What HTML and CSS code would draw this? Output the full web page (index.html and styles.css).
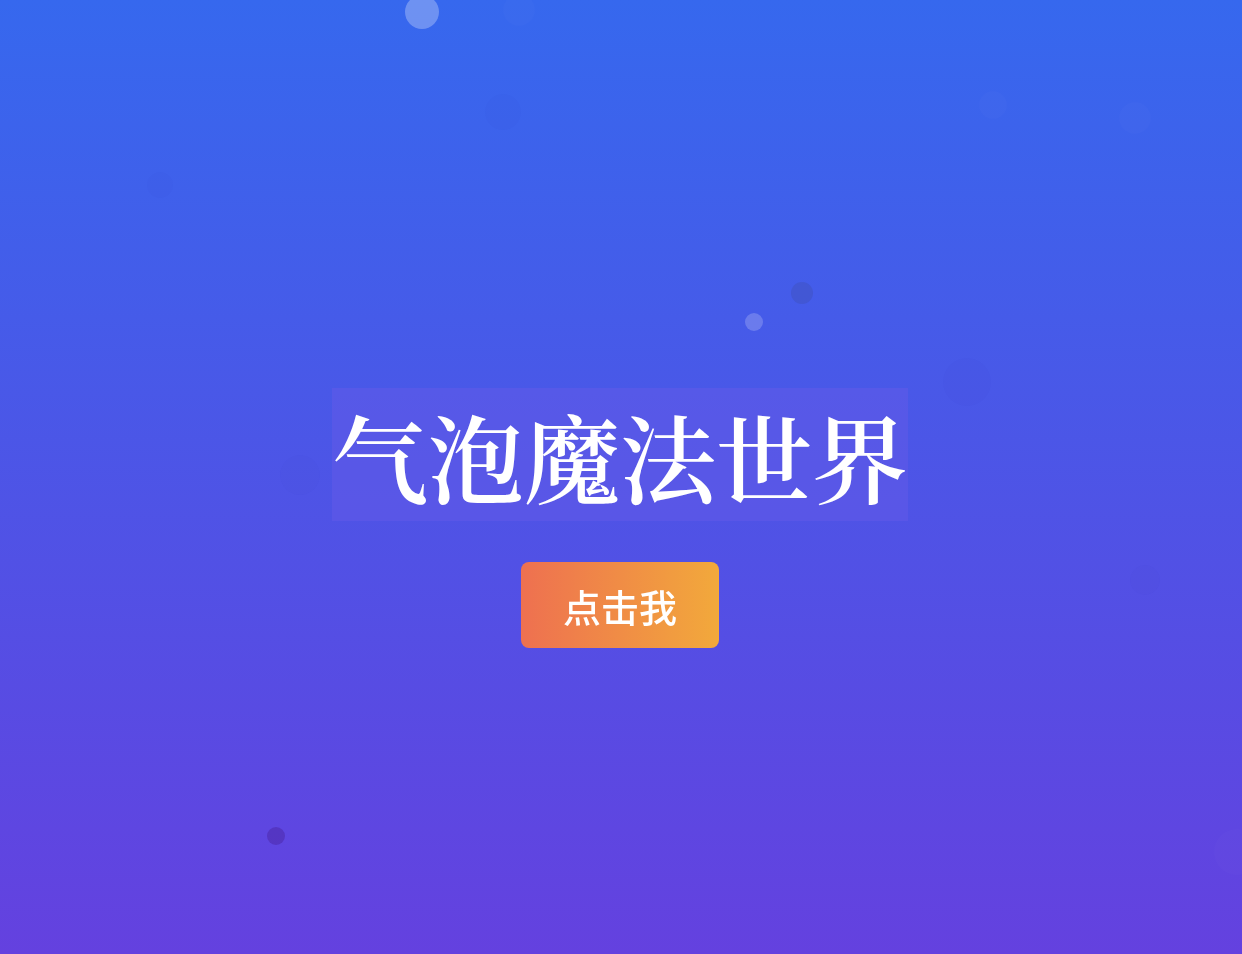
FILE: index.html
```html
<!DOCTYPE html>
<html lang="zh-CN">
<head>
    <meta charset="UTF-8">
    <meta name="viewport" content="width=device-width, initial-scale=1.0">
    <title>气泡魔法世界</title>
    <link rel="stylesheet" href="styles.css">
</head>
<body>
    <!-- 背景气泡 -->
    <div class="bubbles">
        <span class="bubble light" style="left:405px;top:-5px;width:34px;height:34px"></span>
        <span class="bubble faint" style="left:503px;top:-6px;width:32px;height:32px"></span>
        <span class="bubble dim" style="left:485px;top:94px;width:36px;height:36px"></span>
        <span class="bubble dim" style="left:147px;top:172px;width:26px;height:26px"></span>
        <span class="bubble dark" style="left:791px;top:282px;width:22px;height:22px"></span>
        <span class="bubble light soft" style="left:745px;top:313px;width:18px;height:18px"></span>
        <span class="bubble dim" style="left:943px;top:358px;width:48px;height:48px"></span>
        <span class="bubble faint" style="left:979px;top:91px;width:28px;height:28px"></span>
        <span class="bubble faint" style="left:1119px;top:102px;width:32px;height:32px"></span>
        <span class="bubble dim" style="left:280px;top:455px;width:40px;height:40px"></span>
        <span class="bubble dim" style="left:1130px;top:565px;width:30px;height:30px"></span>
        <span class="bubble deep" style="left:267px;top:827px;width:18px;height:18px"></span>
        <span class="bubble faint" style="left:1214px;top:829px;width:46px;height:46px"></span>
    </div>

    <div class="container">
        <h1 class="title">气泡魔法世界</h1>
        <button class="magic-btn">点击我</button>
    </div>
</body>
</html>
```

FILE: styles.css
```css
* {
    margin: 0;
    padding: 0;
    box-sizing: border-box;
}

body {
    font-family: "Noto Sans CJK SC", "Noto Sans", sans-serif;
    background: linear-gradient(180deg, #3668ee 0%, #6441df 100%);
    min-height: 100vh;
    overflow: hidden;
    color: white;
}

/* 气泡 */
.bubbles {
    position: fixed;
    inset: 0;
    pointer-events: none;
}

.bubble {
    position: absolute;
    border-radius: 50%;
}

.bubble.light {
    background-color: rgba(255, 255, 255, 0.28);
}

.bubble.soft {
    background-color: rgba(255, 255, 255, 0.2);
}

.bubble.faint {
    background-color: rgba(255, 255, 255, 0.015);
}

.bubble.dim {
    background-color: rgba(40, 40, 160, 0.025);
}

.bubble.dark {
    background-color: rgba(60, 70, 150, 0.25);
}

.bubble.deep {
    background-color: rgba(70, 30, 150, 0.4);
}

/* 主体 */
.container {
    position: relative;
    min-height: 100vh;
    padding-top: 82px;
    padding-right: 2px;
    display: flex;
    flex-direction: column;
    align-items: center;
    justify-content: center;
}

.title {
    font-family: "Noto Serif CJK SC", "Noto Serif CJK", serif;
    font-size: 96px;
    font-weight: 600;
    line-height: 133px;
    background-color: rgba(100, 89, 231, 0.5);
    margin-bottom: 41px;
}

.magic-btn {
    font-family: "Noto Sans CJK SC", sans-serif;
    font-size: 38px;
    font-weight: 500;
    color: white;
    border: none;
    border-radius: 8px;
    width: 198px;
    height: 86px;
    background: linear-gradient(90deg, #ee7050, #f2a93b);
    cursor: pointer;
}
```
